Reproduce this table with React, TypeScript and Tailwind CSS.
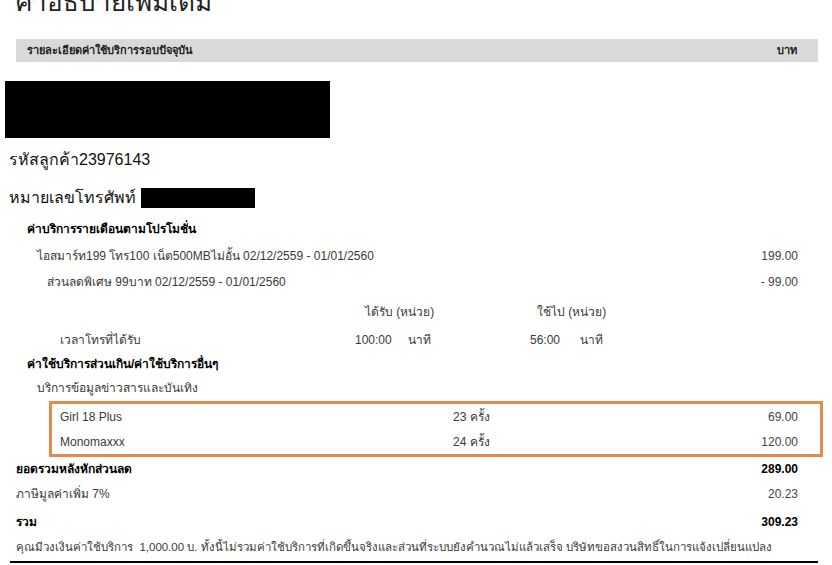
const FONT = "font-['Liberation_Sans','Noto_Sans',sans-serif]";

function Amount({ children, bold }: { children: React.ReactNode; bold?: boolean }) {
  return (
    <div className={`ml-auto pr-[34px] ${bold ? "font-bold text-black" : "text-[#444]"}`}>
      {children}
    </div>
  );
}

export default function App() {
  return (
    <div className={`w-[832px] h-[565px] overflow-hidden bg-white text-[12px] text-[#3a3a3a] ${FONT}`}>
      {/* page title, cut off by the top edge */}
      <div className="h-[39px] overflow-hidden pl-[15px]">
        <div className="text-[26px] leading-none -mt-[11px] text-[#222]">ค่าอธิบายเพิ่มเติม</div>
      </div>

      <div className="ml-[16px] w-[802px] h-[23px] bg-[#d9d9d9] flex items-center justify-between pl-[11px] pr-[21px] text-[11px] font-bold text-[#222]">
        <span>รายละเอียดค่าใช้บริการรอบปัจจุบัน</span>
        <span>บาท</span>
      </div>

      <div className="ml-[5px] mt-[19px] w-[325px] h-[57px] bg-black" />

      <div className="h-[44px] flex items-center pl-[9px] text-[16px] text-[#111]">รหัสลูกค้า23976143</div>

      <div className="h-[32px] flex items-center pl-[9px] text-[16px] text-[#111]">
        <span>หมายเลขโทรศัพท์</span>
        <span className="ml-[5px] w-[114px] h-[20px] bg-black" />
      </div>

      <div className="h-[30px] flex items-center pl-[27px] font-bold text-black">ค่าบริการรายเดือนตามโปรโมชั่น</div>

      <div className="h-[24px] flex items-center pl-[37px]">
        <span>ไอสมาร์ท199 โทร100 เน็ต500MBไม่อั้น 02/12/2559 - 01/01/2560</span>
        <Amount>199.00</Amount>
      </div>

      <div className="h-[28px] flex items-center pl-[47px]">
        <span>ส่วนลดพิเศษ 99บาท 02/12/2559 - 01/01/2560</span>
        <Amount>- 99.00</Amount>
      </div>

      <div className="h-[31px] flex items-center">
        <span className="ml-[365px] w-[172px]">ได้รับ (หน่วย)</span>
        <span>ใช้ไป (หน่วย)</span>
      </div>

      <div className="h-[25px] flex items-center">
        <span className="ml-[60px] w-[295px]">เวลาโทรที่ได้รับ</span>
        <span className="w-[53px]">100:00</span>
        <span className="w-[122px]">นาที</span>
        <span className="w-[50px]">56:00</span>
        <span>นาที</span>
      </div>

      <div className="h-[23px] flex items-center pl-[27px] font-bold text-black">ค่าใช้บริการส่วนเกิน/ค่าใช้บริการอื่นๆ</div>

      <div className="h-[26px] flex items-center pl-[37px]">บริการข้อมูลข่าวสารและบันเทิง</div>

      <div className="ml-[49px] w-[774px] h-[56px] border-[3px] border-[#e38b4b] flex flex-col">
        <div className="h-[25px] flex items-center">
          <span className="ml-[8px] w-[393px]">Girl 18 Plus</span>
          <span>23 ครั้ง</span>
          <span className="ml-auto pr-[22px] text-[#444]">69.00</span>
        </div>
        <div className="h-[25px] flex items-center">
          <span className="ml-[8px] w-[393px]">Monomaxxx</span>
          <span>24 ครั้ง</span>
          <span className="ml-auto pr-[22px] text-[#444]">120.00</span>
        </div>
      </div>

      <div className="h-[23px] flex items-center pl-[16px] font-bold text-black">
        <span>ยอดรวมหลังหักส่วนลด</span>
        <Amount bold>289.00</Amount>
      </div>

      <div className="h-[27px] flex items-center pl-[16px]">
        <span>ภาษีมูลค่าเพิ่ม 7%</span>
        <Amount>20.23</Amount>
      </div>

      <div className="h-[29px] flex items-center pl-[16px] font-bold text-black">
        <span>รวม</span>
        <Amount bold>309.23</Amount>
      </div>

      <div className="h-[24px] flex items-center pl-[16px] text-[11.5px]">
        คุณมีวงเงินค่าใช้บริการ&nbsp;&nbsp;1,000.00 บ. ทั้งนี้ไม่รวมค่าใช้บริการที่เกิดขึ้นจริงและส่วนที่ระบบยังคำนวณไม่แล้วเสร็จ บริษัทขอสงวนสิทธิ์ในการแจ้งเปลี่ยนแปลง
      </div>

      <div className="ml-[10px] w-[808px] h-[2px] bg-black mt-[1px]" />
    </div>
  );
}
